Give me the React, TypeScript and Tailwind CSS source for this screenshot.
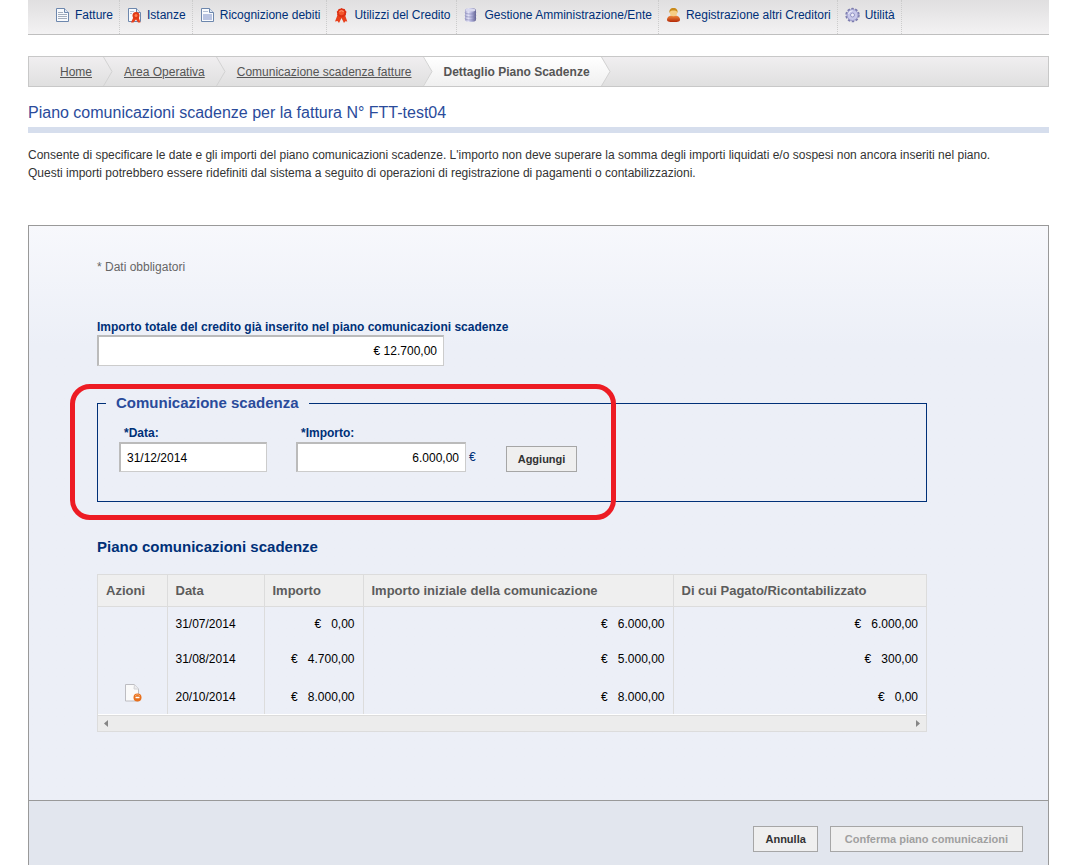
import type { ReactNode } from "react";

const menu = [
  { label: "Fatture", icon: <DocIcon lines /> },
  { label: "Istanze", icon: <DocIcon ribbon /> },
  { label: "Ricognizione debiti", icon: <DocIcon /> },
  { label: "Utilizzi del Credito", icon: <RibbonIcon /> },
  { label: "Gestione Amministrazione/Ente", icon: <DatabaseIcon /> },
  { label: "Registrazione altri Creditori", icon: <UserIcon /> },
  { label: "Utilità", icon: <GearIcon /> },
];

const crumbs = ["Home", "Area Operativa", "Comunicazione scadenza fatture"];

const rows = [
  { data: "31/07/2014", importo: "0,00", iniziale: "6.000,00", pagato: "6.000,00", canDelete: false },
  { data: "31/08/2014", importo: "4.700,00", iniziale: "5.000,00", pagato: "300,00", canDelete: false },
  { data: "20/10/2014", importo: "8.000,00", iniziale: "8.000,00", pagato: "0,00", canDelete: true },
];

/* ============================ Icons ============================ */

function DocIcon({ lines, ribbon }: { lines?: boolean; ribbon?: boolean }) {
  return (
    <svg width="16" height="16" viewBox="0 0 16 16" fill="none">
      <path d="M1.5 1.5h8l4 4v9h-12z" fill="#f8fafd" stroke="#6d87ad" />
      <path d="M9.5 1.5v4h4" fill="#dfe7f3" stroke="#6d87ad" />
      {lines && <path d="M3 5.5h5M3 7.500h9M3 9.500h9M3 11.500h9" stroke="#a3adbd" />}
      {!lines && !ribbon && (
        <>
          <path d="M3 4.500h5" stroke="#b4c0d6" />
          <path d="M3 7h9v6H3z" fill="#b9c4e2" />
        </>
      )}
      {ribbon && (
        <>
          <path d="M3 4.500h4M3 6.500h2" stroke="#b4c0d6" />
          <path d="M6.500 10L4 15.500h2.500L9 12.500l2 3h2.500L11.500 10z" fill="#e8401c" />
          <circle cx="9" cy="8.500" r="3.500" fill="#e03a16" />
          <circle cx="9" cy="8.500" r="1.500" fill="#ff7a4c" />
        </>
      )}
    </svg>
  );
}

function RibbonIcon() {
  return (
    <svg width="16" height="16" viewBox="0 0 16 16">
      <path d="M3.500 8L1 14.500l2.500-.5 1.500 2L7.500 11l2.500 5 1.300-1.800 2 .3L11 8z" fill="#e8401c" />
      <path
        d="M7.500 1l1.500.8 1.700.1.700 1.600 1.100 1.300-.5 1.700-.1 1.800-1.600.7L9 10.200l-1.500-.5-1.700.4-1.100-1.300-1.600-.8.100-1.700L2.700 4.700l1.200-1.200.8-1.600 1.700-.1z"
        fill="#dc2f12"
      />
      <circle cx="7.500" cy="5.500" r="2.800" fill="#f4572c" />
      <path d="M5.500 5a2.200 2.200 0 014 0" fill="none" stroke="#ffa07c" />
    </svg>
  );
}

function DatabaseIcon() {
  return (
    <svg width="16" height="16" viewBox="0 0 16 16" fill="none">
      <defs>
        <linearGradient id="db">
          <stop offset="0" stopColor="#a4a4cc" />
          <stop offset="0.3" stopColor="#e4e4f8" />
          <stop offset="0.6" stopColor="#b0b0da" />
          <stop offset="1" stopColor="#606090" />
        </linearGradient>
      </defs>
      <path d="M1 3c0-1.200 2.500-2 5.500-2S12 1.800 12 3v10c0 1.200-2.500 2-5.500 2S1 14.200 1 13z" fill="url(#db)" />
      <ellipse cx="6.500" cy="3" rx="5" ry="1.500" fill="#d9d9ef" />
      <path
        d="M1 5.500c0 1 2.500 1.500 5.500 1.500S12 6.500 12 5.500M1 8.500c0 1 2.500 1.500 5.500 1.500S12 9.500 12 8.500M1 11.500c0 1 2.500 1.500 5.500 1.500s5.500-.5 5.500-1.500"
        stroke="#8080b0"
        strokeWidth="0.6"
      />
    </svg>
  );
}

function UserIcon() {
  return (
    <svg width="16" height="16" viewBox="0 0 16 16">
      <defs>
        <linearGradient id="shirt" x2="0" y2="1">
          <stop offset="0" stopColor="#f08a3c" />
          <stop offset="1" stopColor="#b42a08" />
        </linearGradient>
      </defs>
      <path d="M1 12.500C1 10 3 9 5 8.500h5c2 .5 4 1.500 4 4 0 2-1.500 2.500-6.500 2.500S1 14.500 1 12.500z" fill="url(#shirt)" />
      <circle cx="7.500" cy="5.500" r="3.700" fill="#f6cd84" />
      <path d="M3.500 6C3 3 4.500 1 7.500 1s4.500 2 4 5c-.5-2-1.500-2.500-4-2.500S4 4 3.500 6z" fill="#c98a1a" />
    </svg>
  );
}

function GearIcon() {
  return (
    <svg width="16" height="16" viewBox="0 0 16 16" fill="none">
      <circle cx="7.500" cy="8" r="6.300" stroke="#7c7cae" strokeWidth="1.800" strokeDasharray="2.500 1.458" />
      <circle cx="7.500" cy="8" r="5.500" fill="#c8c8ea" stroke="#9a9aca" />
      <circle cx="7.500" cy="8" r="2" fill="#f0f0fa" stroke="#9494c4" />
      <path d="M3.500 7a4 4 0 014-3.200" stroke="#f0f0fc" />
    </svg>
  );
}

function DeleteIcon() {
  return (
    <svg width="18" height="18" viewBox="0 0 18 18" fill="none">
      <path d="M1.5.5h9l4 4.500v12h-13z" fill="#fafafa" stroke="#bdbdc2" />
      <path d="M10.500.5l-.5 4.500h4.500" fill="#ececee" stroke="#d2d2d6" />
      <circle cx="13.500" cy="13.500" r="4" fill="#e8701c" />
      <path d="M11 12a3 3 0 015 0" stroke="#f8a868" />
      <path d="M11.500 13.500h4" stroke="#fff" strokeWidth="1.500" />
    </svg>
  );
}

/* ============================ Breadcrumb arrow ============================ */

function Arrow({ side }: { side?: "before" | "after" }) {
  return (
    <svg width="10" height="29" viewBox="0 0 10 29" fill="none" className="shrink-0">
      <defs>
        <linearGradient id="current" x2="0" y2="29" gradientUnits="userSpaceOnUse">
          <stop offset="0" stopColor="#ffffff" />
          <stop offset="1" stopColor="#f0f0f0" />
        </linearGradient>
      </defs>
      {side === "before" && <path d="M0 0h10v29H0l9-14.500z" fill="url(#current)" />}
      {side === "after" && <path d="M0 0l9 14.500L0 29z" fill="url(#current)" />}
      <path d="M.5 0l8.500 14.500L.5 29" stroke="#d2d2d2" />
    </svg>
  );
}

const Button = ({ children, disabled }: { children: ReactNode; disabled?: boolean }) => (
  <button
    type="button"
    disabled={disabled}
    className="h-[26px] border border-[#a6a6a6] bg-[#efefef] px-[11px] text-[11px] font-bold text-[#333] disabled:px-3.5 disabled:text-[#a0a0a0]"
  >
    {children}
  </button>
);

const inputClass =
  "block border border-t-2 border-l-2 border-[#ccc] border-t-[#bbb] border-l-[#bbb] bg-white px-1.5 text-xs text-black";

const App = () => {
  return (
    <div className="flex min-h-screen flex-col bg-white pr-[22px] pl-7 font-['Liberation_Sans',Arial,sans-serif] text-xs text-[#333]">
      {/* ============================ Main menu ============================ */}
      <nav className="flex h-[35px] border-b border-[#bfbfbf] bg-linear-to-b from-[#e0dfe0] to-[#f3f2f3] pl-5">
        {menu.map((item) => (
          <a
            key={item.label}
            href="#"
            className="flex items-start gap-1 border-r border-dotted border-[#ccc] pr-[6px] pl-[7px] pt-[7px] leading-4 whitespace-nowrap text-[#003078]"
          >
            {item.icon}
            {item.label}
          </a>
        ))}
      </nav>

      {/* ============================ Breadcrumb ============================ */}
      <nav className="mt-[21px] flex h-[31px] items-center border border-[#c8c8c8] bg-linear-to-b from-[#f0eef0] to-[#e0e0e0] pl-5 whitespace-nowrap">
        {crumbs.map((crumb, i) => (
          <div key={crumb} className="flex items-center">
            <a href="#" className="pr-[11px] pl-[11px] text-[#555] underline">
              {crumb}
            </a>
            <Arrow side={i === crumbs.length - 1 ? "before" : undefined} />
          </div>
        ))}
        <span className="flex h-full items-center bg-linear-to-b from-white to-[#f0f0f0] pr-[11px] pl-[11px] font-bold text-[#555]">
          Dettaglio Piano Scadenze
        </span>
        <Arrow side="after" />
      </nav>

      <h1 className="mt-4 border-b-6 border-[#d6deed] pb-1 text-base leading-5 text-[#2a4b9b]">
        Piano comunicazioni scadenze per la fattura N° FTT-test04
      </h1>
      <p className="mt-[13px] leading-[18px]">
        Consente di specificare le date e gli importi del piano comunicazioni scadenze. L'importo non deve superare la
        somma degli importi liquidati e/o sospesi non ancora inseriti nel piano.
        <br />
        Questi importi potrebbero essere ridefiniti dal sistema a seguito di operazioni di registrazione di pagamenti o
        contabilizzazioni.
      </p>

      {/* ============================ Form ============================ */}
      <form className="mt-[43px] flex grow flex-col border border-b-0 border-[#999]">
        <div className="bg-[#eceff7] bg-linear-to-b from-[#f7f8fc] to-[#eceff7] to-[120px] pt-8 pr-[121px] pb-[68px] pl-[68px]">
          <p className="leading-[18px] text-[#666]">* Dati obbligatori</p>

          <label htmlFor="totale" className="mt-[43px] block leading-4 font-bold text-[#003078]">
            Importo totale del credito già inserito nel piano comunicazioni scadenze
          </label>
          <input id="totale" defaultValue="€ 12.700,00" className={`${inputClass} h-[31px] w-[347px] text-right`} />

          <div className="relative mt-7">
            <fieldset className="h-[108px] border border-[#003078] pl-[21px]">
              <legend className="-ml-[13px] px-2.5 text-[15px] leading-[18px] font-bold text-[#2a4b9b]">
                Comunicazione scadenza
              </legend>
              <div className="mt-3 flex items-end">
                <div>
                  <label htmlFor="data" className="block pl-[5px] leading-[18px] font-bold text-[#003078]">
                    *Data:
                  </label>
                  <input id="data" defaultValue="31/12/2014" className={`${inputClass} h-[30px] w-[148px]`} />
                </div>
                <div className="ml-[29px]">
                  <label htmlFor="importo" className="block pl-[5px] leading-[18px] font-bold text-[#003078]">
                    *Importo:
                  </label>
                  <div className="flex items-center gap-[3px] text-[#003078]">
                    <input id="importo" defaultValue="6.000,00" className={`${inputClass} h-[30px] w-[170px] text-right`} />
                    €
                  </div>
                </div>
                <div className="ml-[30px]">
                  <Button>Aggiungi</Button>
                </div>
              </div>
            </fieldset>
            {/* red highlight around the deadline fields */}
            <div className="pointer-events-none absolute -top-2.5 -left-[27px] h-[136px] w-[546px] rounded-[20px] border-5 border-[#ed1c24]" />
          </div>

          {/* ============================ Plan table ============================ */}
          <h2 className="mt-9 text-[15px] leading-[18px] font-bold text-[#003078]">Piano comunicazioni scadenze</h2>
          <div className="mt-[18px] border border-[#dcdcdc]">
            <table className="w-full table-fixed border-collapse">
              <colgroup>
                <col className="w-[69px]" />
                <col className="w-[97px]" />
                <col className="w-[99px]" />
                <col className="w-[310px]" />
                <col />
              </colgroup>
              <thead>
                <tr className="h-[31px] border-b border-[#dcdcdc] bg-[#efefef] text-left text-[13px] text-[#5c5c5c] [&>th]:border-r [&>th]:border-[#dcdcdc] [&>th]:px-2 [&>th:last-child]:border-r-0">
                  <th>Azioni</th>
                  <th>Data</th>
                  <th>Importo</th>
                  <th>Importo iniziale della comunicazione</th>
                  <th>Di cui Pagato/Ricontabilizzato</th>
                </tr>
              </thead>
              <tbody className="text-black">
                {rows.map((row) => (
                  <tr
                    key={row.data}
                    className={`text-right [&>td]:border-r [&>td]:border-[#dcdcdc] [&>td]:px-2 [&>td:last-child]:border-r-0 ${
                      row.canDelete ? "h-[38px] [&>td]:pt-1" : "h-[35px]"
                    }`}
                  >
                    <td className="align-top">
                      {row.canDelete && (
                        <button type="button" aria-label="Elimina" className="mt-1 block pl-[18px]">
                          <DeleteIcon />
                        </button>
                      )}
                    </td>
                    <td className="text-left">{row.data}</td>
                    <td>€ &nbsp; {row.importo}</td>
                    <td>€ &nbsp; {row.iniziale}</td>
                    <td>€ &nbsp; {row.pagato}</td>
                  </tr>
                ))}
              </tbody>
            </table>
            <div className="border-t border-white">
              <div className="flex h-4 items-center justify-between border-t border-[#dcdcdc] bg-[#ececec] px-1.5">
                <svg width="5" height="7" viewBox="0 0 5 7">
                  <path d="M4 0v7L0 3.500z" fill="#868686" />
                </svg>
                <svg width="5" height="7" viewBox="0 0 5 7">
                  <path d="M1 0v7l4-3.500z" fill="#868686" />
                </svg>
              </div>
            </div>
          </div>
        </div>

        <div className="flex grow items-start justify-end gap-3 border-t border-[#999] bg-[#e2e6ee] pt-[25px] pr-[25px]">
          <Button>Annulla</Button>
          <Button disabled>Conferma piano comunicazioni</Button>
        </div>
      </form>
    </div>
  );
};

export default App;
